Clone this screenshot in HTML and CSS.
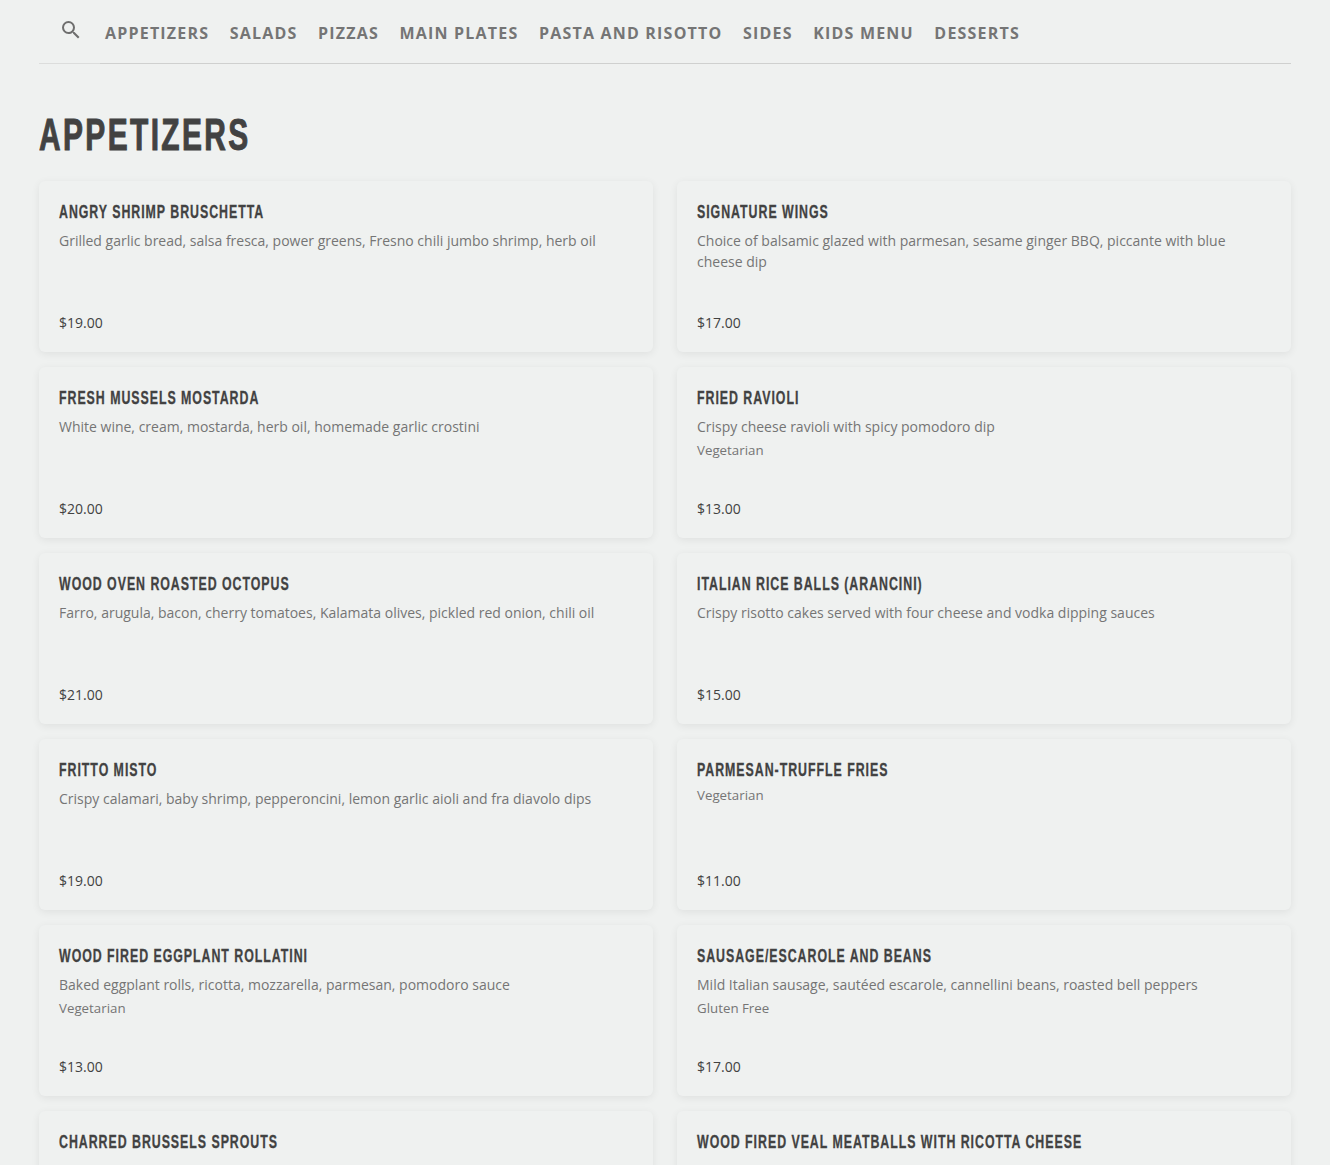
FILE: index.html
```html
<!DOCTYPE html>
<html lang="en">
<head>
    <meta charset="UTF-8">
    <title>Menu</title>
    <link rel="stylesheet" href="styles.css">
</head>
<body>

<nav class="menu-nav">
    <div class="search-tab">
        <svg class="search-icon" viewBox="0 0 24 24" width="24" height="24"><path d="M15.5 14h-.79l-.28-.27A6.47 6.47 0 0 0 16 9.5 6.5 6.5 0 1 0 9.5 16c1.61 0 3.09-.59 4.23-1.57l.27.28v.79l5 4.99L20.49 19l-4.99-5zm-6 0C7.01 14 5 11.99 5 9.5S7.01 5 9.5 5 14 7.01 14 9.5 11.99 14 9.5 14z"/></svg>
    </div>
    <ul class="nav-links">
        <li>Appetizers</li>
        <li>Salads</li>
        <li>Pizzas</li>
        <li>Main Plates</li>
        <li>Pasta and Risotto</li>
        <li>Sides</li>
        <li>Kids Menu</li>
        <li>Desserts</li>
    </ul>
</nav>

<h1 class="section-title">Appetizers</h1>

<div class="items">
    <div class="item">
        <h3>Angry Shrimp Bruschetta</h3>
        <p class="desc">Grilled garlic bread, salsa fresca, power greens, Fresno chili jumbo shrimp, herb oil</p>
        <p class="price">$19.00</p>
    </div>
    <div class="item">
        <h3>Signature Wings</h3>
        <p class="desc">Choice of balsamic glazed with parmesan, sesame ginger BBQ, piccante with blue cheese dip</p>
        <p class="price">$17.00</p>
    </div>
    <div class="item">
        <h3>Fresh Mussels Mostarda</h3>
        <p class="desc">White wine, cream, mostarda, herb oil, homemade garlic crostini</p>
        <p class="price">$20.00</p>
    </div>
    <div class="item">
        <h3>Fried Ravioli</h3>
        <p class="desc">Crispy cheese ravioli with spicy pomodoro dip</p>
        <p class="diet">Vegetarian</p>
        <p class="price">$13.00</p>
    </div>
    <div class="item">
        <h3>Wood Oven Roasted Octopus</h3>
        <p class="desc">Farro, arugula, bacon, cherry tomatoes, Kalamata olives, pickled red onion, chili oil</p>
        <p class="price">$21.00</p>
    </div>
    <div class="item">
        <h3>Italian Rice Balls (Arancini)</h3>
        <p class="desc">Crispy risotto cakes served with four cheese and vodka dipping sauces</p>
        <p class="price">$15.00</p>
    </div>
    <div class="item">
        <h3>Fritto Misto</h3>
        <p class="desc">Crispy calamari, baby shrimp, pepperoncini, lemon garlic aioli and fra diavolo dips</p>
        <p class="price">$19.00</p>
    </div>
    <div class="item">
        <h3>Parmesan-Truffle Fries</h3>
        <p class="diet diet-first">Vegetarian</p>
        <p class="price">$11.00</p>
    </div>
    <div class="item">
        <h3>Wood Fired Eggplant Rollatini</h3>
        <p class="desc">Baked eggplant rolls, ricotta, mozzarella, parmesan, pomodoro sauce</p>
        <p class="diet">Vegetarian</p>
        <p class="price">$13.00</p>
    </div>
    <div class="item">
        <h3>Sausage/Escarole and Beans</h3>
        <p class="desc">Mild Italian sausage, sautéed escarole, cannellini beans, roasted bell peppers</p>
        <p class="diet">Gluten Free</p>
        <p class="price">$17.00</p>
    </div>
    <div class="item">
        <h3>Charred Brussels Sprouts</h3>
        <p class="desc">Pickled onion, pancetta, balsamic, shaved parmesan</p>
        <p class="price">$14.00</p>
    </div>
    <div class="item">
        <h3>Wood Fired Veal Meatballs with Ricotta Cheese</h3>
        <p class="desc">Slow-braised veal meatballs, pomodoro sauce, creamy ricotta, garlic crostini</p>
        <p class="price">$18.00</p>
    </div>
</div>

</body>
</html>
```

FILE: styles.css
```css
html {
    height: 100%;
    overflow: hidden;
}

body {
    margin: 0;
    padding: 0 39px;
    height: 100%;
    overflow: hidden;
    background-color: #eff1f0;
    font-family: "Open Sans", sans-serif;
    font-size: 14px;
    color: #757575;
}

.menu-nav {
    display: flex;
    height: 64px;
}

.search-tab {
    width: 61px;
    padding: 18px 0 0 20px;
    box-sizing: border-box;
    border-bottom: 1px solid #dcdddc;
}

.search-icon {
    display: block;
    fill: #6e6e6e;
}

.nav-links {
    display: flex;
    flex: 1;
    gap: 20.5px;
    margin: 0;
    padding: 21px 0 0 5px;
    border-bottom: 1px solid #cfd0cf;
    list-style: none;
    font-size: 16px;
    font-weight: 700;
    line-height: 24px;
    letter-spacing: 1.2px;
    text-transform: uppercase;
    color: #757575;
}

/* no condensed face installed, so squeeze a bold sans */
.section-title {
    margin: 38px 0 0;
    height: 79px;
    font-family: "Liberation Sans", sans-serif;
    font-size: 44px;
    font-weight: 700;
    line-height: 66px;
    letter-spacing: 3.5px;
    text-transform: uppercase;
    color: #424242;
    -webkit-text-stroke: 1px #424242;
    transform: scaleX(0.68);
    transform-origin: left;
}

.items {
    display: grid;
    grid-template-columns: 614px 614px;
    column-gap: 24px;
    row-gap: 15px;
}

.item {
    position: relative;
    height: 171px;
    box-sizing: border-box;
    padding: 20px;
    border-radius: 6px;
    background-color: #eff1f0;
    box-shadow: 0 2px 9px rgba(0, 0, 0, 0.07);
}

.item h3 {
    margin: 0;
    font-family: "Liberation Sans", sans-serif;
    font-size: 19px;
    font-weight: 700;
    line-height: 22px;
    letter-spacing: 1.5px;
    white-space: nowrap;
    text-transform: uppercase;
    color: #424242;
    -webkit-text-stroke: 0.3px #424242;
    transform: scaleX(0.65);
    transform-origin: left;
}

.desc {
    margin: 7px 0 0;
    line-height: 21px;
}

.diet {
    margin: 3px 0 0;
    font-size: 13.3px;
    line-height: 21px;
}

.diet-first {
    margin-top: 4px;
}

.price {
    position: absolute;
    left: 20px;
    bottom: 19px;
    margin: 0;
    line-height: 21px;
    color: #424242;
}
```
